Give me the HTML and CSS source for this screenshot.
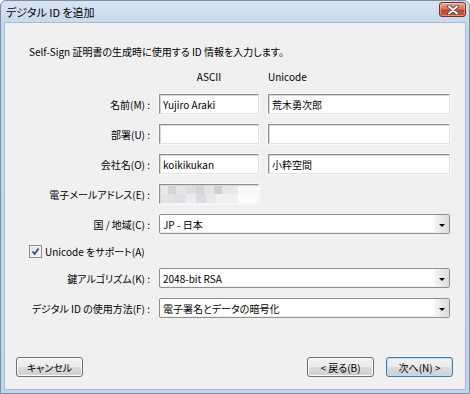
FILE: index.html
```html
<!DOCTYPE html>
<html lang="ja">
<head>
    <meta charset="UTF-8">
    <link rel="stylesheet" href="styles.css">
    <title>デジタル ID を追加</title>
</head>
<body>
<div id="window">
    <div id="titlebar">
        <span class="title">デジタル ID を追加</span>
        <span class="close">
            <svg width="14" height="10" viewBox="0 0 14 10">
                <path d="M3 1.5 L11 8.5 M11 1.5 L3 8.5" stroke="#4a3a38" stroke-width="3.6" stroke-linecap="round"/>
                <path d="M3 1.5 L11 8.5 M11 1.5 L3 8.5" stroke="#fff" stroke-width="2" stroke-linecap="round"/>
            </svg>
        </span>
    </div>

    <div id="content">
        <p class="intro">Self-Sign 証明書の生成時に使用する ID 情報を入力します。</p>

        <div id="form">
            <span></span>
            <span class="colhead ascii">ASCII</span>
            <span class="colhead">Unicode</span>

            <span class="label">名前(M) :</span>
            <div class="field">Yujiro Araki</div>
            <div class="field">荒木勇次郎</div>

            <span class="label">部署(U) :</span>
            <div class="field"></div>
            <div class="field"></div>

            <span class="label">会社名(O) :</span>
            <div class="field">koikikukan</div>
            <div class="field">小粋空間</div>

            <span class="label">電子メールアドレス(E) :</span>
            <div class="field disabled"></div>
            <span></span>

            <span class="label">国 / 地域(C) :</span>
            <div class="combo">JP - 日本<span class="arrow"></span></div>

            <div class="check">
                <span class="box">
                    <svg width="9" height="9" viewBox="0 0 9 9">
                        <path d="M1.5 4.5 L3.6 7 L7.6 1.5" fill="none" stroke="#2f4a9a" stroke-width="1.7"/>
                    </svg>
                </span>
                Unicode をサポート(A)
            </div>

            <span class="label">鍵アルゴリズム(K) :</span>
            <div class="combo">2048-bit RSA<span class="arrow"></span></div>

            <span class="label">デジタル ID の使用方法(F) :</span>
            <div class="combo">電子署名とデータの暗号化<span class="arrow"></span></div>
        </div>

        <div id="buttons">
            <button class="btn">キャンセル</button>
            <span class="spacer"></span>
            <button class="btn">&lt; 戻る(B)</button>
            <button class="btn default">次へ(N) &gt;</button>
        </div>
    </div>
</div>
</body>
</html>
```

FILE: styles.css
```css
body {
    margin: 0;
    width: 470px;
    height: 394px;
    overflow: hidden;
    font-family: "Noto Sans CJK JP", "Noto Sans", sans-serif;
    font-size: 10px;
    font-feature-settings: "palt";
    color: #000;
}
#window {
    box-sizing: border-box;
    height: 394px;
    display: flex;
    flex-direction: column;
    border: 1px solid #7d8ea3;
    border-radius: 6px 6px 0 0;
    padding: 0 3px 3px;
    background: linear-gradient(#d6e3f2, #c4d6ec 30px, #c2d5eb);
}
#titlebar {
    height: 21px;
    display: flex;
    align-items: center;
    padding-left: 2px;
}
.title {
    flex: 1;
    font-size: 11px;
}
.close {
    width: 25px;
    height: 13px;
    margin: -4px 0 0;
    display: flex;
    align-items: center;
    justify-content: center;
    border: 1px solid #7a2b1f;
    border-radius: 3px;
    background: linear-gradient(#e6a896, #d37559 45%, #c2462b 55%, #c75a3e);
    box-shadow: inset 0 0 0 1px rgba(255,255,255,0.35);
}

#content {
    flex: 1;
    display: flex;
    flex-direction: column;
    background: #f0f0f0;
    border: 1px solid #a9bbd1;
}
.intro {
    margin: 22px 0 0 24px;
    line-height: 14px;
}
#form {
    margin: 11px 0 0 24px;
    display: grid;
    grid-template-columns: 121px 100px 182px;
    grid-template-rows: 14px repeat(5, 20px) 14px 20px 20px;
    column-gap: 9px;
    row-gap: 10px;
    align-items: center;
}
.colhead {
    line-height: 14px;
}
.colhead.ascii {
    text-align: center;
}
.label {
    text-align: right;
    white-space: nowrap;
}
.field {
    box-sizing: border-box;
    height: 20px;
    padding: 0 3px;
    display: flex;
    align-items: center;
    background: #fff;
    border: 1px solid;
    border-color: #8c8c8c #e2e2e2 #e2e2e2 #8c8c8c;
    box-shadow: inset 1px 1px 0 #d8d8d8, 0 0 0 1px #f9f9f9;
}
.field.disabled {
    border-color: #8c8c8c #f4f4f4 #f4f4f4 #8c8c8c;
    background:
        linear-gradient(90deg, #eaeaea 0 8px, #d3d3d6 8px 16px, #e6e6e8 16px 26px, #dcdce2 26px 36px, #d2d6d2 36px 44px, #e3e3e6 44px 54px, #cfcfd4 54px 62px, #e8e8ea 62px 78px, #f7f7f7 78px) top / 100% 50% no-repeat,
        linear-gradient(90deg, #e4e4e6 0 14px, #e0e0e3 14px 26px, #ececee 26px 36px, #dcdce0 36px 46px, #e8e8ea 46px 56px, #f1f1f2 56px 78px, #fafafa 78px) bottom / 100% 50% no-repeat;
}
.combo {
    grid-column: 2 / 4;
    box-sizing: border-box;
    height: 20px;
    display: flex;
    align-items: center;
    padding-left: 3px;
    background: #fff;
    border: 1px solid #8e8f8f;
    border-radius: 2px;
    box-shadow: inset 0 -1px 0 #f0f0f0;
}
.arrow {
    margin-left: auto;
    align-self: stretch;
    width: 15px;
    display: flex;
    align-items: center;
    justify-content: center;
    background: linear-gradient(90deg, #f6f6f6, #dcdcdc);
}
.arrow::after {
    content: "";
    margin-top: 2px;
    border-left: 3px solid transparent;
    border-right: 3px solid transparent;
    border-top: 3px solid #000;
}
.check {
    grid-column: 1 / 4;
    display: flex;
    align-items: center;
    gap: 3px;
}
.box {
    box-sizing: border-box;
    width: 13px;
    height: 13px;
    display: flex;
    align-items: center;
    justify-content: center;
    border: 1px solid #8e8f8f;
    background: linear-gradient(135deg, #dedede, #fbfbfb);
    box-shadow: inset 0 0 0 1px #f4f4f4;
}

#buttons {
    margin-top: auto;
    display: flex;
    gap: 12px;
    padding: 0 12px 12px 11px;
}
.spacer {
    flex: 1;
}
.btn {
    width: 67px;
    height: 20px;
    padding: 0;
    font: inherit;
    font-feature-settings: "palt";
    color: #000;
    border: 1px solid #707070;
    border-radius: 3px;
    background: linear-gradient(#f2f2f2, #ebebeb 50%, #dddddd 50%, #cfcfcf);
    box-shadow: inset 0 0 0 1px #fcfcfc;
}
.btn.default {
    border-color: #3c7fb1;
    box-shadow: inset 0 0 0 1px #b6e0f7;
}
```
